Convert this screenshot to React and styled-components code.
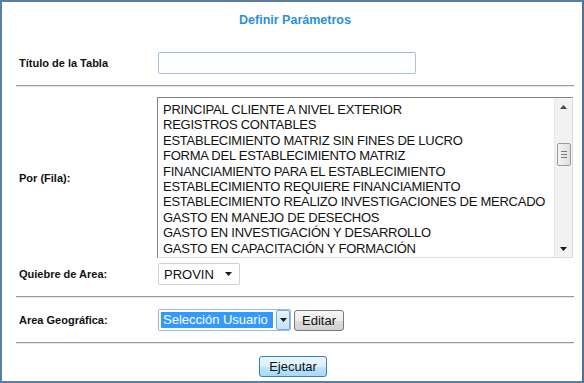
import styled, { createGlobalStyle } from 'styled-components'

const Global = createGlobalStyle`
  html, body {
    margin: 0;
    padding: 0;
    background: #ffffff;
  }
  body {
    font-family: 'Liberation Sans', Arial, sans-serif;
  }
`

const items = [
  'PRINCIPAL CLIENTE A NIVEL EXTERIOR',
  'REGISTROS CONTABLES',
  'ESTABLECIMIENTO MATRIZ SIN FINES DE LUCRO',
  'FORMA DEL ESTABLECIMIENTO MATRIZ',
  'FINANCIAMIENTO PARA EL ESTABLECIMIENTO',
  'ESTABLECIMIENTO REQUIERE FINANCIAMIENTO',
  'ESTABLECIMIENTO REALIZO INVESTIGACIONES DE MERCADO',
  'GASTO EN MANEJO DE DESECHOS',
  'GASTO EN INVESTIGACIÓN Y DESARROLLO',
  'GASTO EN CAPACITACIÓN Y FORMACIÓN'
]

const Caret = ({ up }) => (
  <svg width='7' height='4' viewBox='0 0 7 4'>
    {up ? <path d='M0 4 L3.5 0 L7 4 Z' fill='#4a4a4a' /> : <path d='M0 0 L7 0 L3.5 4 Z' fill='#1a1a1a' />}
  </svg>
)

const App = () => {
  return (
    <>
      <Global />
      <Frame>
        <Title>Definir Parámetros</Title>

        <Row $top={24}>
          <Label>Título de la Tabla</Label>
          <TextInput />
        </Row>

        <Rule $top={11} />

        <Row $top={10}>
          <Label>Por (Fila):</Label>
          <ListBox>
            <Items>
              {items.map((it) => (
                <Item key={it}>{it}</Item>
              ))}
            </Items>
            <Scrollbar>
              <ArrowBtn>
                <Caret up />
              </ArrowBtn>
              <Track>
                <Thumb>
                  <Grip />
                  <Grip />
                  <Grip />
                </Thumb>
              </Track>
              <ArrowBtn>
                <Caret />
              </ArrowBtn>
            </Scrollbar>
          </ListBox>
        </Row>

        <Row $top={5}>
          <Label>Quiebre de Area:</Label>
          <Select $w={82}>
            <SelectText>PROVIN</SelectText>
            <PlainArrow>
              <Caret />
            </PlainArrow>
          </Select>
        </Row>

        <Rule $top={11} />

        <Row $top={11}>
          <Label>Area Geográfica:</Label>
          <Controls>
            <Select $w={133} $active>
              <Selected>Selección Usuario</Selected>
              <DropBtn>
                <Caret />
              </DropBtn>
            </Select>
            <Button>Editar</Button>
          </Controls>
        </Row>

        <Rule $top={11} />

        <Footer>
          <RunButton>Ejecutar</RunButton>
        </Footer>
      </Frame>
    </>
  )
}
export default App

const Frame = styled.div`
  box-sizing: border-box;
  width: 584px;
  height: 383px;
  border: 2px solid #5b7ea6;
  border-right-color: #4d6f98;
  padding: 10px 8px 0 14px;
  display: flex;
  flex-direction: column;
  background: #fff;
  overflow: hidden;
`

const Title = styled.div`
  text-align: center;
  font-size: 12.5px;
  line-height: 16px;
  font-weight: 700;
  color: #2b8fe0;
`

const Row = styled.div`
  display: grid;
  grid-template-columns: 142px 1fr;
  align-items: center;
  margin-top: ${(p) => p.$top}px;
`

const Label = styled.div`
  padding-left: 3px;
  font-size: 11px;
  font-weight: 700;
  color: #111;
`

const TextInput = styled.div`
  box-sizing: border-box;
  width: 258px;
  height: 22px;
  border: 1px solid #a9c3de;
  border-top-color: #9fb7d2;
  border-radius: 2px;
  background: #fff;
`

const Rule = styled.div`
  margin-top: ${(p) => p.$top}px;
  height: 0;
  border-top: 1px solid #9a9a9a;
  border-bottom: 1px solid #e6e6e6;
`

const ListBox = styled.div`
  box-sizing: border-box;
  width: 416px;
  height: 161px;
  margin-left: -1px;
  display: flex;
  border: 1px solid #dcdcdc;
  border-top-color: #828282;
  border-left-color: #828282;
  background: #fff;
`

const Items = styled.div`
  flex: 1;
  padding: 4px 0 0 5px;
  overflow: hidden;
`

const Item = styled.div`
  font-size: 13px;
  line-height: 15.4px;
  letter-spacing: -0.25px;
  color: #111;
  white-space: nowrap;
`

const Scrollbar = styled.div`
  width: 17px;
  display: flex;
  flex-direction: column;
  background: #f2f2f2;
  border-left: 1px solid #e8e8e8;
`

const ArrowBtn = styled.div`
  height: 17px;
  display: flex;
  align-items: center;
  justify-content: center;
`

const Track = styled.div`
  flex: 1;
  padding-top: 28px;
  display: flex;
  justify-content: center;
`

const Thumb = styled.div`
  box-sizing: border-box;
  width: 14px;
  height: 23px;
  border: 1px solid #9b9b9b;
  border-radius: 2px;
  background: linear-gradient(to right, #f4f4f4, #dedede);
  display: flex;
  flex-direction: column;
  align-items: center;
  justify-content: center;
  gap: 2px;
`

const Grip = styled.div`
  width: 6px;
  height: 1px;
  background: #7a7a7a;
`

const Select = styled.div`
  box-sizing: border-box;
  width: ${(p) => p.$w}px;
  height: 22px;
  display: flex;
  align-items: center;
  border: 1px solid ${(p) => (p.$active ? '#9fb8d6' : '#d0d0d0')};
  border-radius: 2px;
  background: #fff;
  padding: 2px;
`

const SelectText = styled.div`
  flex: 1;
  font-size: 13px;
  padding-left: 3px;
  color: #111;
`

const PlainArrow = styled.div`
  width: 14px;
  display: flex;
  justify-content: center;
  padding-right: 2px;
`

const Selected = styled.div`
  flex: 1;
  height: 16px;
  line-height: 16px;
  font-size: 13px;
  color: #fff;
  background: #3399ff;
  padding-left: 2px;
  white-space: nowrap;
  margin-right: 3px;
`

const DropBtn = styled.div`
  box-sizing: border-box;
  width: 14px;
  height: 20px;
  margin: -2px -2px -2px 0;
  border: 1px solid #7fa9d6;
  border-radius: 2px;
  background: linear-gradient(#e6f3fd, #c6e2f8);
  display: flex;
  align-items: center;
  justify-content: center;
`

const Controls = styled.div`
  display: flex;
  align-items: center;
  gap: 3px;
`

const Button = styled.div`
  box-sizing: border-box;
  height: 21px;
  padding: 0 7px;
  display: flex;
  align-items: center;
  font-size: 13px;
  color: #111;
  border: 1px solid #777;
  border-radius: 3px;
  background: linear-gradient(#f6f6f6 0%, #ececec 50%, #dcdcdc 51%, #d2d2d2 100%);
`

const Footer = styled.div`
  margin-top: 12px;
  display: flex;
  justify-content: center;
  padding-right: 4px;
`

const RunButton = styled(Button)`
  width: 68px;
  justify-content: center;
  border-color: #3c7fb1;
  background: linear-gradient(#eaf6fd 0%, #d9f0fc 50%, #bee6fd 51%, #a7d9f5 100%);
`
